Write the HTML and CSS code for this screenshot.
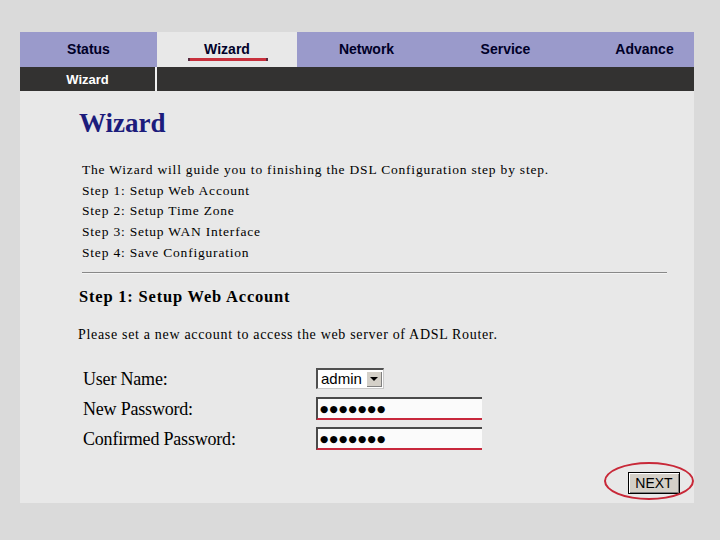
FILE: index.html
```html
<!DOCTYPE html>
<html lang="en">
<head>
<meta charset="UTF-8" />
<meta name="viewport" content="width=device-width, initial-scale=1" />
<title>ADSL Router - Wizard</title>
<link rel="stylesheet" href="styles.css">
</head>
<body>
<div class="page">
  <!-- top menu -->
  <div class="tabs">
    <div class="tab">Status</div>
    <div class="tab active">Wizard<span class="mark"></span></div>
    <div class="tab">Network</div>
    <div class="tab">Service</div>
    <div class="tab last">Advance</div>
  </div>
  <div class="subnav">
    <div class="subnav-item">Wizard</div>
  </div>

  <div class="content">
    <h1 class="title">Wizard</h1>
    <div class="intro">
      <p>The Wizard will guide you to finishing the DSL Configuration step by step.</p>
      <p>Step 1: Setup Web Account</p>
      <p>Step 2: Setup Time Zone</p>
      <p>Step 3: Setup WAN Interface</p>
      <p>Step 4: Save Configuration</p>
    </div>
    <hr class="rule" />
    <h2 class="step-title">Step 1: Setup Web Account</h2>
    <p class="note">Please set a new account to access the web server of ADSL Router.</p>

    <div class="form">
      <label class="field-label">User Name:</label>
      <div class="select">
        <span class="select-value">admin</span>
        <span class="select-btn"><span class="arrow"></span></span>
      </div>
      <label class="field-label">New Password:</label>
      <div><input class="pass" type="text" value="●●●●●●●" readonly /></div>
      <label class="field-label">Confirmed Password:</label>
      <div><input class="pass" type="text" value="●●●●●●●" readonly /></div>
    </div>

    <div class="actions">
      <div class="next-wrap">
        <button class="next" type="button">NEXT</button>
      </div>
    </div>
  </div>
</div>
</body>
</html>
```

FILE: styles.css
```css
body {
  margin: 0;
  background: #dadada;
  font-family: "Liberation Serif", serif;
  color: #000;
}
.page {
  width: 674px;
  height: 471px;
  margin: 32px 0 0 20px;
  background: #e8e8e8;
  overflow: hidden;
}
.tabs {
  display: grid;
  grid-template-columns: 137px 140px 139px 139px 1fr;
  height: 35px;
  background: #9a9acb;
}
.tab {
  position: relative;
  display: flex;
  align-items: center;
  justify-content: center;
  font-family: "Liberation Sans", sans-serif;
  font-weight: bold;
  font-size: 14px;
  color: #000028;
  padding-bottom: 2px;
  box-sizing: border-box;
}
.tab.active {
  background: #e8e8e8;
}
.tab.last {
  padding-left: 20px;
}
.tab .mark {
  position: absolute;
  left: 31px;
  top: 26px;
  width: 80px;
  height: 3px;
  background: #c8303c;
  border-left: 2px solid #5a2a40;
  border-right: 2px solid #5a2a40;
  box-sizing: border-box;
}
.subnav {
  display: flex;
  height: 24px;
  background: #333231;
}
.subnav-item {
  width: 135px;
  border-right: 2px solid #f0f0f0;
  display: flex;
  align-items: center;
  justify-content: center;
  color: #fff;
  font-family: "Liberation Sans", sans-serif;
  font-weight: bold;
  font-size: 13px;
}
.content {
  padding-left: 59px;
}
.title {
  margin: 19px 0 0;
  font-size: 27px;
  line-height: 27px;
  font-weight: bold;
  color: #1c1c7c;
}
.intro {
  margin: 23px 0 0 3px;
  font-size: 13.5px;
  line-height: 20.7px;
  letter-spacing: 0.8px;
}
.intro p {
  margin: 0;
}
.rule {
  margin: 8px 0 0 3px;
  width: 585px;
  height: 0;
  border: 0;
  border-top: 1px solid #888;
  border-bottom: 1px solid #f4f4f4;
}
.step-title {
  margin: 13px 0 0;
  font-size: 16.5px;
  line-height: 20px;
  letter-spacing: 0.8px;
  font-weight: bold;
}
.note {
  margin: 18px 0 0 -1px;
  font-size: 14px;
  line-height: 20px;
  letter-spacing: 0.68px;
}
.form {
  display: grid;
  grid-template-columns: 233px 1fr;
  grid-auto-rows: 30px;
  align-items: center;
  margin: 19px 0 0 4px;
}
.field-label {
  font-size: 18px;
  line-height: 30px;
  letter-spacing: -0.2px;
}
.select {
  display: flex;
  align-items: center;
  width: 68px;
  height: 21px;
  box-sizing: border-box;
  border-top: 2px solid #505050;
  border-left: 2px solid #505050;
  border-right: 1px solid #c8c8c8;
  border-bottom: 1px solid #c8c8c8;
  background: #fff;
}
.select-value {
  flex: 1;
  padding-left: 3px;
  font-family: "Liberation Sans", sans-serif;
  font-size: 15px;
  line-height: 18px;
}
.select-btn {
  display: flex;
  align-items: center;
  justify-content: center;
  width: 16px;
  height: 16px;
  margin-right: 1px;
  background: #d4d0c8;
  box-shadow: inset 1px 1px #fff, inset -1px -1px #808080;
}
.arrow {
  width: 0;
  height: 0;
  border-left: 4px solid transparent;
  border-right: 4px solid transparent;
  border-top: 4px solid #000;
}
.pass {
  display: block;
  width: 166px;
  height: 23px;
  box-sizing: border-box;
  margin: 0;
  padding: 0 0 0 2px;
  border: 0;
  border-top: 2px solid #4a4a4a;
  border-left: 2px solid #4a4a4a;
  border-bottom: 2px solid #c8283c;
  background: #fbfbfb;
  font-family: "DejaVu Sans", sans-serif;
  font-size: 9.5px;
  letter-spacing: 1.2px;
  color: #000;
  outline: none;
}
.actions {
  display: flex;
  justify-content: flex-end;
  padding-right: 14px;
  margin-top: 18px;
}
.next-wrap {
  position: relative;
}
.next-wrap::after {
  content: "";
  position: absolute;
  left: -24px;
  top: -10px;
  width: 90px;
  height: 38px;
  box-sizing: border-box;
  border: 2px solid #c82838;
  border-radius: 50%;
}
.next {
  display: block;
  width: 52px;
  height: 22px;
  padding: 0;
  background: #d4d0c8;
  border: 1px solid #000;
  box-shadow: inset 1px 1px #fff, inset -1px -1px #808080;
  font-family: "Liberation Sans", sans-serif;
  font-size: 14px;
  color: #000;
}
```
